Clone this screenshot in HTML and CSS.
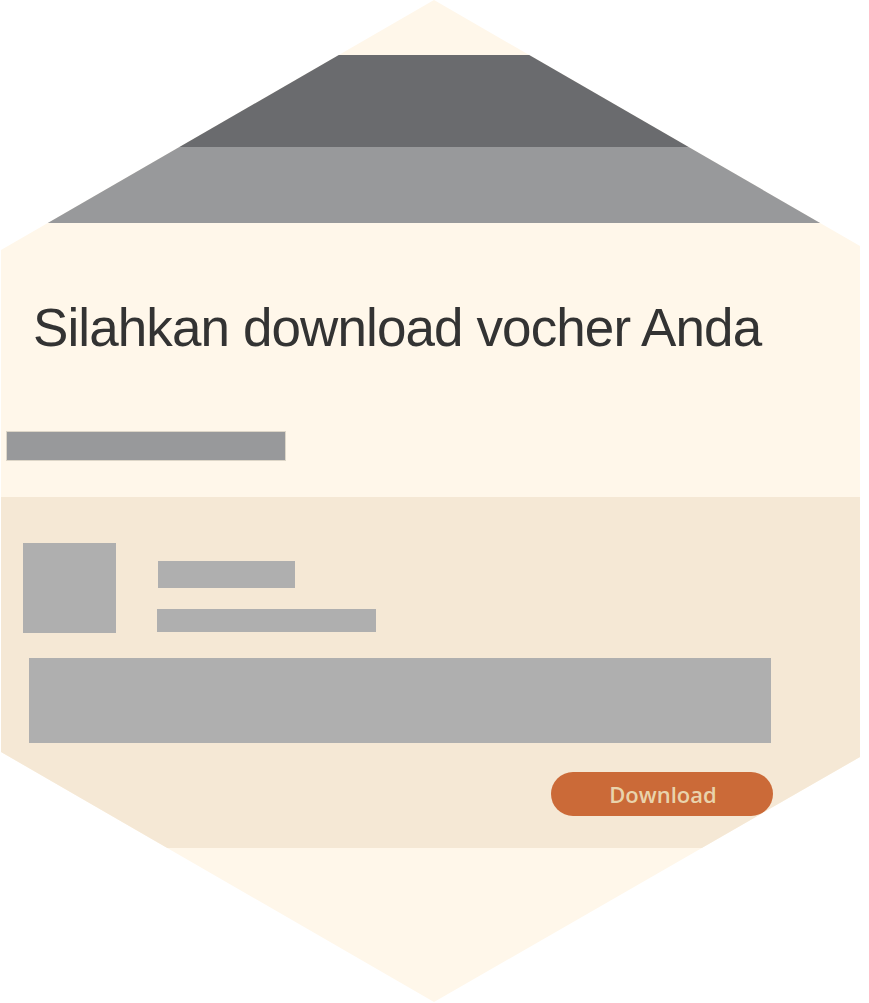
FILE: index.html
```html
<!DOCTYPE html>
<html lang="id">
<head>
<meta charset="utf-8">
<title>Download Voucher</title>
<link rel="stylesheet" href="styles.css">
</head>
<body>
<div class="hex">
  <div class="hex-cap"></div>
  <div class="band band-dark"></div>
  <div class="band band-mid"></div>
  <section class="intro">
    <h1 class="title">Silahkan download vocher Anda</h1>
    <div class="bar bar-intro"></div>
  </section>
  <section class="card">
    <div class="card-row">
      <div class="thumb"></div>
      <div class="lines">
        <div class="line line-short"></div>
        <div class="line line-long"></div>
      </div>
    </div>
    <div class="block"></div>
    <div class="actions">
      <button class="btn">Download</button>
    </div>
  </section>
</div>
</body>
</html>
```

FILE: styles.css
```css
html, body {
  margin: 0;
  padding: 0;
  background: #ffffff;
}

.hex {
  width: 869px;
  height: 1003px;
  background: #FFF7EA;
  display: flex;
  flex-direction: column;
  clip-path: polygon(434px 0px, 860px 246px, 860px 757px, 434px 1002px, 1px 752px, 1px 250px);
}

.hex-cap {
  height: 55px;
  flex: none;
}

.band {
  flex: none;
}

.band-dark {
  height: 92px;
  background: #6A6B6E;
}

.band-mid {
  height: 76px;
  background: #98999B;
}

.intro {
  height: 274px;
  flex: none;
  display: flex;
  flex-direction: column;
}

.title {
  margin: 77px 0 0 33px;
  font-family: "Liberation Sans", Arial, sans-serif;
  font-weight: normal;
  font-size: 53px;
  line-height: 56px;
  color: #333333;
  letter-spacing: -0.9px;
  white-space: nowrap;
}

.bar-intro {
  margin: 75px 0 0 6px;
  width: 280px;
  height: 30px;
  background: #98999B;
  box-shadow: 0 0 0 1px #ddd6c8 inset;
}

.card {
  height: 351px;
  flex: none;
  background: #F5E8D5;
  display: flex;
  flex-direction: column;
}

.card-row {
  display: flex;
  margin: 46px 0 0 23px;
}

.thumb {
  width: 93px;
  height: 90px;
  background: #AFAFAF;
}

.lines {
  display: flex;
  flex-direction: column;
}

.line {
  background: #AFAFAF;
}

.line-short {
  width: 137px;
  height: 27px;
  margin: 18px 0 0 42px;
}

.line-long {
  width: 219px;
  height: 23px;
  margin: 21px 0 0 41px;
}

.block {
  margin: 25px 0 0 29px;
  width: 742px;
  height: 85px;
  background: #AFAFAF;
}

.actions {
  display: flex;
  margin: 29px 0 0 551px;
}

.btn {
  width: 222px;
  height: 44px;
  border: none;
  border-radius: 22px;
  background: #CB6A38;
  color: #E9D3AC;
  font-family: "Open Sans", "Noto Sans", sans-serif;
  font-weight: 600;
  font-size: 22px;
  padding: 0 0 0 2px;
  display: flex;
  align-items: center;
  justify-content: center;
}
```
